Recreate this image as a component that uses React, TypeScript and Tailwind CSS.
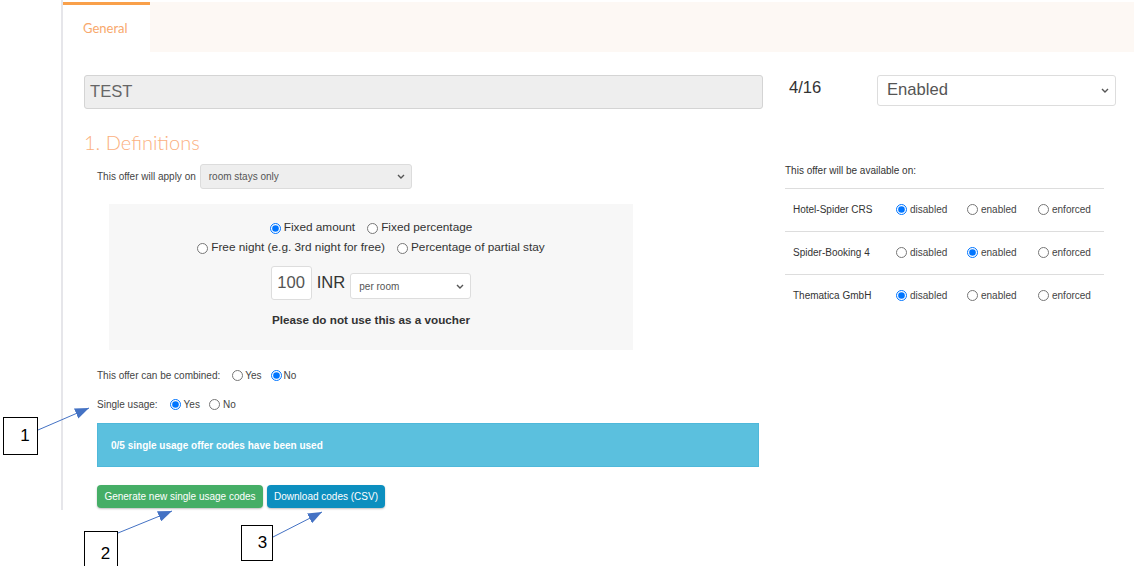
import React from "react";

function Radio({ checked = false }: { checked?: boolean }) {
  return (
    <input
      type="radio"
      defaultChecked={checked}
      className="m-0 h-[11px] w-[11px] shrink-0"
    />
  );
}

function Chevron() {
  return (
    <svg width="8" height="5" viewBox="0 0 8 5" className="shrink-0">
      <path d="M1 1l3 3 3-3" stroke="#555" strokeWidth="1.4" fill="none" />
    </svg>
  );
}

const channels = [
  { name: "Hotel-Spider CRS", sel: 0 },
  { name: "Spider-Booking 4", sel: 1 },
  { name: "Thematica GmbH", sel: 0 },
];

export default function App() {
  return (
    <div className="relative h-[566px] w-[1139px] overflow-hidden bg-white font-['Liberation_Sans',Arial,sans-serif] text-[#333]">
      <div className="ml-[61px] h-[510px] w-[1073px] border-l-2 border-[#e6e6ea] pt-[2px]">
        {/* tabs */}
        <div className="flex h-[50px] bg-[#fdf8f4]">
          <div className="flex w-[87px] items-center border-t-[3px] border-[#f9a04a] bg-white pl-[20px] font-['Lato',sans-serif] text-[13px] text-[#f8a86c]">
            General
          </div>
        </div>

        <div className="flex pl-[21px] pt-[23px]">
          {/* left column */}
          <div className="w-[679px]">
            <div className="h-[34px] rounded-[3px] border border-[#d4d4d4] bg-[#eeeeee] pl-[5px] text-[16.6px] leading-[32px] text-[#666]">
              TEST
            </div>
            <div className="mt-[20px] font-['Lato',sans-serif] text-[20px] font-light leading-[26px] text-[#fbb07e]">
              1. Definitions
            </div>
            <div className="mt-[9px] flex items-center pl-[13px]">
              <span className="text-[10px] text-[#444]">This offer will apply on</span>
              <div className="ml-[4px] flex h-[25px] w-[212px] items-center justify-between rounded-[3px] border border-[#dcdcdc] bg-[#eeeeee] pl-[8px] pr-[6px] text-[10px] text-[#555]">
                room stays only
                <Chevron />
              </div>
            </div>

            {/* discount box */}
            <div className="ml-[25px] mt-[15px] h-[146px] w-[524px] bg-[#f7f7f7] pt-[14px] text-[11.8px] text-[#333]">
              <div className="flex h-[20px] items-center justify-center gap-[12px]">
                <label className="flex items-center gap-[3px]">
                  <Radio checked />
                  Fixed amount
                </label>
                <label className="flex items-center gap-[3px]">
                  <Radio />
                  Fixed percentage
                </label>
              </div>
              <div className="flex h-[20px] items-center justify-center gap-[12px]">
                <label className="flex items-center gap-[3px]">
                  <Radio />
                  Free night (e.g. 3rd night for free)
                </label>
                <label className="flex items-center gap-[3px]">
                  <Radio />
                  Percentage of partial stay
                </label>
              </div>
              <div className="mt-[8px] flex items-end justify-center gap-[5px]">
                <div className="flex h-[34px] w-[41px] items-center justify-center rounded-[3px] border border-[#dddddd] bg-white text-[16.6px] text-[#555]">
                  100
                </div>
                <div className="self-center text-[16.6px] leading-[20px] text-[#333]">INR</div>
                <div className="mb-[1px] flex h-[26px] w-[121px] items-center justify-between rounded-[3px] border border-[#dddddd] bg-white pl-[8px] pr-[6px] text-[10px] text-[#555]">
                  per room
                  <Chevron />
                </div>
              </div>
              <div className="mt-[12px] text-center text-[11.7px] font-bold leading-[16px] text-[#333]">
                Please do not use this as a voucher
              </div>
            </div>

            <div className="mt-[18px] flex h-[14px] items-center pl-[13px] text-[10px] text-[#444]">
              <span>This offer can be combined:</span>
              <label className="ml-[12px] flex items-center gap-[2px]">
                <Radio />
                Yes
              </label>
              <label className="ml-[9px] flex items-center gap-[2px]">
                <Radio checked />
                No
              </label>
            </div>
            <div className="mt-[15px] flex h-[14px] items-center pl-[13px] text-[10px] text-[#444]">
              <span>Single usage:</span>
              <label className="ml-[12px] flex items-center gap-[3px]">
                <Radio checked />
                Yes
              </label>
              <label className="ml-[9px] flex items-center gap-[3px]">
                <Radio />
                No
              </label>
            </div>

            <div className="ml-[13px] mt-[12px] flex h-[44px] w-[662px] items-center border border-[#4fb8da] bg-[#5bc0de] pl-[13px] text-[10px] font-bold text-white">
              0/5 single usage offer codes have been used
            </div>

            <div className="ml-[13px] mt-[18px] flex gap-[4px]">
              <div className="flex h-[23px] w-[166px] items-center justify-center rounded-[4px] bg-[#45ae66] text-[10px] text-white shadow-[0_1px_2px_rgba(0,0,0,0.25)]">
                Generate new single usage codes
              </div>
              <div className="flex h-[23px] w-[118px] items-center justify-center rounded-[4px] bg-[#0c8fbf] text-[10px] text-white shadow-[0_1px_2px_rgba(0,0,0,0.25)]">
                Download codes (CSV)
              </div>
            </div>
          </div>

          {/* right column */}
          <div className="ml-[22px] w-[331px]">
            <div className="flex items-start">
              <div className="w-[92px] pl-[4px] pt-[3px] text-[16.6px] leading-[20px] text-[#333]">4/16</div>
              <div className="flex h-[31px] w-[239px] items-center justify-between rounded-[3px] border border-[#dddddd] bg-white pl-[9px] pr-[6px] text-[16.6px] text-[#555]">
                Enabled
                <Chevron />
              </div>
            </div>
            <div className="mt-[58px] text-[10px] leading-[14px] text-[#333]">
              This offer will be available on:
            </div>
            <div className="mt-[10px] w-[319px]">
              {channels.map((c) => (
                <div
                  key={c.name}
                  className="grid h-[43px] grid-cols-[111px_71px_71px_1fr] items-center border-t border-[#dddddd] pb-[2px] text-[10px] text-[#333]"
                >
                  <span className="pl-[8px]">{c.name}</span>
                  {["disabled", "enabled", "enforced"].map((l, i) => (
                    <label key={l} className="flex items-center gap-[3px] text-[#444]">
                      <Radio checked={c.sel === i} />
                      {l}
                    </label>
                  ))}
                </div>
              ))}
            </div>
          </div>
        </div>
      </div>

      {/* annotations */}
      <svg className="pointer-events-none absolute left-0 top-0" width="1139" height="566">
        <defs>
          <marker
            id="ah"
            markerWidth="14"
            markerHeight="11"
            refX="14"
            refY="5.5"
            orient="auto"
            markerUnits="userSpaceOnUse"
          >
            <path d="M0,0 L14,5.5 L0,11 z" fill="#4472c4" />
          </marker>
        </defs>
        <line x1="38" y1="430" x2="89" y2="408" stroke="#4472c4" strokeWidth="1" markerEnd="url(#ah)" />
        <line x1="118" y1="533" x2="172" y2="511" stroke="#4472c4" strokeWidth="1" markerEnd="url(#ah)" />
        <line x1="273" y1="537" x2="322" y2="512" stroke="#4472c4" strokeWidth="1" markerEnd="url(#ah)" />
      </svg>
      <div className="absolute left-[3px] top-[417px] flex h-[38px] w-[35px] items-center justify-center border border-black bg-white pl-[9px] text-[17px] text-black">
        1
      </div>
      <div className="absolute left-[84px] top-[531px] flex h-[38px] w-[34px] items-start justify-center border border-black bg-white pl-[9px] pt-[9px] text-[17px] text-black">
        2
      </div>
      <div className="absolute left-[241px] top-[525px] flex h-[36px] w-[32px] items-center justify-center border border-black bg-white pl-[11px] text-[17px] text-black">
        3
      </div>
    </div>
  );
}
